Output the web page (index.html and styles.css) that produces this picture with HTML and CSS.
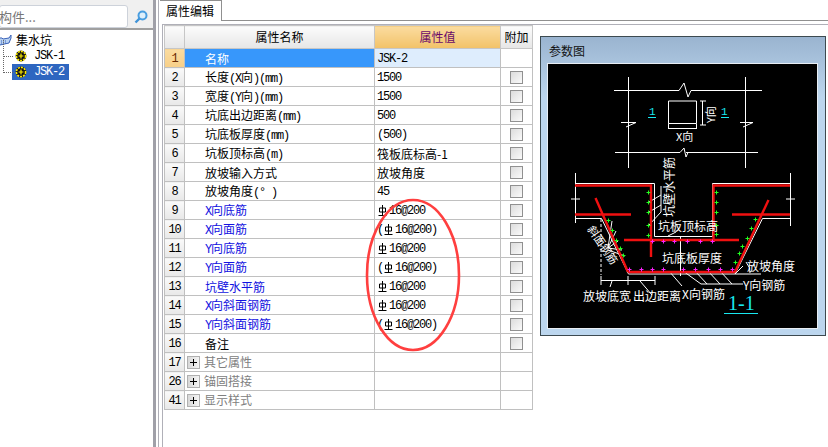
FILE: index.html
```html
<!DOCTYPE html>
<html lang="zh">
<head>
<meta charset="utf-8">
<title>属性编辑</title>
<link rel="stylesheet" href="styles.css">
</head>
<body>
<svg class="defs" width="0" height="0">
  <symbol id="rebar" viewBox="0 0 9 11"><path d="M4.5 0V10M1.5 3H7.5V7H1.5ZM.5 10.5H8.5" fill="none" stroke="#000"/></symbol>
  <symbol id="gear" viewBox="0 0 12 12"><circle cx="6" cy="6" r="5.4" fill="#111"/><circle cx="6" cy="6" r="4.6" fill="none" stroke="#ffee00" stroke-width="1.6" stroke-dasharray="2 1"/><circle cx="6" cy="6" r="2.6" fill="#111"/><path d="M6 3.6V8.4M3.6 6H8.4" stroke="#ffee00" stroke-width="1.2"/></symbol>
</svg>
<div class="app">
  <aside class="side">
    <div class="search">
      <div class="search-input">构件...</div>
      <svg class="search-icon" width="14" height="14" viewBox="0 0 14 14"><circle cx="8.5" cy="5.5" r="4" fill="#dff0fb" stroke="#4a9ee0" stroke-width="2"/><path d="M5.5 8.5 1.5 12.5" stroke="#3f93d8" stroke-width="2.4"/></svg>
    </div>
    <div class="tree">
      <div class="tree-root">
        <svg class="root-icon" width="13" height="14" viewBox="0 0 13 14"><path d="M-1 5h3l1 1 6-1 2-3v3l-2 5-9 2-2-4z" fill="#b9d2f2" stroke="#3a62b8"/><path d="M1 8h6M1 10h5" stroke="#3a62b8" stroke-dasharray="1 1"/></svg>
        <span class="cjk">集水坑</span>
      </div>
      <div class="tree-item"><div class="node"><svg class="gear" width="12" height="12"><use href="#gear"/></svg><span class="lt">JSK-1</span></div></div>
      <div class="tree-item"><div class="node sel"><svg class="gear" width="12" height="12"><use href="#gear"/></svg><span class="lt">JSK-2</span></div></div>
    </div>
  </aside>
  <main class="main">
    <div class="tabs"><div class="tab">属性编辑</div></div>
    <div class="content">
      <table class="grid">
        <colgroup><col class="c0"><col class="c1"><col class="c2"><col class="c3"></colgroup>
        <thead><tr><th></th><th>属性名称</th><th class="hv">属性值</th><th>附加</th></tr></thead>
        <tbody>
          <tr class="active"><td class="n">1</td><td class="name">名称</td><td class="val">JSK-2</td><td></td></tr>
          <tr><td class="n">2</td><td class="name">长度<span class="lt">(X</span>向<span class="lt">)(mm)</span></td><td class="val">1500</td><td class="ck"><i></i></td></tr>
          <tr><td class="n">3</td><td class="name">宽度<span class="lt">(Y</span>向<span class="lt">)(mm)</span></td><td class="val">1500</td><td class="ck"><i></i></td></tr>
          <tr><td class="n">4</td><td class="name">坑底出边距离<span class="lt">(mm)</span></td><td class="val">500</td><td class="ck"><i></i></td></tr>
          <tr><td class="n">5</td><td class="name">坑底板厚度<span class="lt">(mm)</span></td><td class="val">(500)</td><td class="ck"><i></i></td></tr>
          <tr><td class="n">6</td><td class="name">坑板顶标高<span class="lt">(m)</span></td><td class="val cj">筏板底标高-1</td><td class="ck"><i></i></td></tr>
          <tr><td class="n">7</td><td class="name">放坡输入方式</td><td class="val cj">放坡角度</td><td class="ck"><i></i></td></tr>
          <tr><td class="n">8</td><td class="name">放坡角度<span class="lt">(° )</span></td><td class="val">45</td><td class="ck"><i></i></td></tr>
          <tr><td class="n">9</td><td class="name blue"><span class="lt">X</span>向底筋</td><td class="val"><svg class="rb"><use href="#rebar"/></svg>16@200</td><td class="ck"><i></i></td></tr>
          <tr><td class="n">10</td><td class="name blue"><span class="lt">X</span>向面筋</td><td class="val">(<svg class="rb"><use href="#rebar"/></svg>16@200)</td><td class="ck"><i></i></td></tr>
          <tr><td class="n">11</td><td class="name blue"><span class="lt">Y</span>向底筋</td><td class="val"><svg class="rb"><use href="#rebar"/></svg>16@200</td><td class="ck"><i></i></td></tr>
          <tr><td class="n">12</td><td class="name blue"><span class="lt">Y</span>向面筋</td><td class="val">(<svg class="rb"><use href="#rebar"/></svg>16@200)</td><td class="ck"><i></i></td></tr>
          <tr><td class="n">13</td><td class="name blue">坑壁水平筋</td><td class="val"><svg class="rb"><use href="#rebar"/></svg>16@200</td><td class="ck"><i></i></td></tr>
          <tr><td class="n">14</td><td class="name blue"><span class="lt">X</span>向斜面钢筋</td><td class="val"><svg class="rb"><use href="#rebar"/></svg>16@200</td><td class="ck"><i></i></td></tr>
          <tr><td class="n">15</td><td class="name blue"><span class="lt">Y</span>向斜面钢筋</td><td class="val">(<svg class="rb"><use href="#rebar"/></svg>16@200)</td><td class="ck"><i></i></td></tr>
          <tr><td class="n">16</td><td class="name">备注</td><td class="val"></td><td class="ck"><i></i></td></tr>
          <tr class="group"><td class="n">17</td><td class="gname"><i class="plus"></i>其它属性</td><td></td><td></td></tr>
          <tr class="group"><td class="n">26</td><td class="gname"><i class="plus"></i>锚固搭接</td><td></td><td></td></tr>
          <tr class="group"><td class="n">41</td><td class="gname"><i class="plus"></i>显示样式</td><td></td><td></td></tr>
        </tbody>
      </table>
      <svg class="ring" width="100" height="156" viewBox="0 0 100 156"><ellipse cx="50" cy="78" rx="46" ry="75" fill="none" stroke="#ff3f3f" stroke-width="2.6"/></svg>
      <section class="panel">
        <div class="panel-title">参数图</div>
        <svg class="drawing" width="269" height="264" viewBox="548 64 269 264">
          <g class="w">
            <path d="M628.5 77V168M745.5 77V168M614 90.5H679M691 90.5H762M615 152.5H680M686 152.5H758"/>
            <path d="M679 90.5 684 83 688 97 691 90.5M680 152.5 684 148 686 157 688 152.5M621 122.5H636L626 127M740 122.5H753L743 127"/>
            <path d="M668.5 101H696.5V123.5H668.5ZM668.5 123.5V128M696.5 123.5V128M668 128.5H697M702.5 101V125M700 101H706M700 125H706"/>
            <path d="M575.5 173V223M790.5 173V226M571 199H580M786 199H795"/>
            <path d="M575.5 183.5H654.5V236.5H712.5V183.5H790M575.5 218.5H601.5L628.5 274H761M735 274 762.5 218.5H790"/>
            <path d="M661 186V212M661 195 649 202M661 205 649 212M661 212 649 225M680.5 236.5V276M676 232 668 236"/>
            <path d="M601 219V275" stroke-dasharray="3 2"/>
            <path d="M612 221 608 248M616 231 608 248M618 241 608 248M622 250 608 248M625 256 608 250"/>
            <path d="M601 280.5H655M601 276V285M628 276V285M655 276V285M612 281 610 287M640 281 652 295"/>
            <path d="M669 271 682 286M683 271 701 284H743M695 271 707 284M708 271 720 284M720 271 732 284"/>
            <path d="M746 262Q751 268 750 273M743 266 735 274"/>
          </g>
          <g class="r">
            <path d="M575 185.5H651V257M790 185.5H713.5V242M575 214.5H631M732 214.5H790M624 240H739M628 272H735M595.5 198 628 272M768.5 200 735 272"/>
          </g>
          <path class="g" d="M646.5 192.5h4M648.5 190.5v4M646.5 202.5h4M648.5 200.5v4M646.5 212.5h4M648.5 210.5v4M646.5 225.5h4M648.5 223.5v4M646.5 235.5h4M648.5 233.5v4M714.5 192.5h4M716.5 190.5v4M714.5 202.5h4M716.5 200.5v4M714.5 212.5h4M716.5 210.5v4M714.5 225.5h4M716.5 223.5v4M714.5 234.5h4M716.5 232.5v4M606.5 220.5h4M608.5 218.5v4M610.5 230.5h4M612.5 228.5v4M614.5 240.5h4M616.5 238.5v4M618.5 248.5h4M620.5 246.5v4M621.5 255.5h4M623.5 253.5v4M753.5 219.5h4M755.5 217.5v4M749.5 228.5h4M751.5 226.5v4M745.5 238.5h4M747.5 236.5v4M740.5 246.5h4M742.5 244.5v4M737.5 253.5h4M739.5 251.5v4M733.5 262.5h4M735.5 260.5v4"/>
          <path class="m" d="M650.5 241.5h4M652.5 239.5v4M661.5 241.5h4M663.5 239.5v4M672.5 241.5h4M674.5 239.5v4M685.5 241.5h4M687.5 239.5v4M698.5 241.5h4M700.5 239.5v4M710.5 241.5h4M712.5 239.5v4M627.5 269.5h4M629.5 267.5v4M639.5 269.5h4M641.5 267.5v4M650.5 269.5h4M652.5 267.5v4M661.5 269.5h4M663.5 267.5v4M681.5 269.5h4M683.5 267.5v4M693.5 269.5h4M695.5 267.5v4M706.5 269.5h4M708.5 267.5v4M718.5 269.5h4M720.5 267.5v4M730.5 269.5h4M732.5 267.5v4"/>
          <g class="t">
            <text x="676" y="141" class="sm">X向</text>
            <text x="658" y="231">坑板顶标高</text>
            <text x="662" y="263">坑底板厚度</text>
            <text x="747" y="271">放坡角度</text>
            <text x="743" y="290">Y向钢筋</text>
            <text x="682" y="299">X向钢筋</text>
            <text x="633" y="301">出边距离</text>
            <text x="583" y="301">放坡底宽</text>
            <text class="sm" transform="translate(715 123) rotate(-90)">Y向</text>
            <text transform="translate(674 217) rotate(-90)">坑壁水平筋</text>
            <text class="sm" transform="translate(587 229) rotate(56)">斜面钢筋</text>
          </g>
          <g class="c">
            <text x="649" y="115" class="one">1</text>
            <text x="721" y="115" class="one">1</text>
            <text x="728" y="310" class="big">1-1</text>
            <path d="M648 117.5H656M721 117.5H729M724 313.5H758"/>
          </g>
        </svg>
      </section>
    </div>
  </main>
</div>
</body>
</html>
```
FILE: styles.css
```css
* { box-sizing: border-box; }
html, body { margin: 0; height: 100%; background: #fff; overflow: hidden; }
body { font: 12px/1 "Noto Sans CJK SC", "Liberation Sans", sans-serif; color: #000; }
.defs { position: absolute; }
.lt { font-family: "Liberation Mono", monospace; font-size: 12px; letter-spacing: -1.2px; }
.app { display: flex; height: 447px; }
.side { width: 156px; flex: none; border-right: 3px solid #a0a0a8; }
.search { height: 30px; background: #f0f0f0; border-bottom: 2px solid #a0a0a0; padding: 5px 0 0; display: flex; gap: 6px; align-items: flex-start; }
.search-input { width: 129px; height: 23px; margin-left: -1px; padding: 4px 0 0; background: #fff; border: 1px solid #cdd2da; border-radius: 3px; color: #777; font-size: 13px; overflow: hidden; text-indent: -1px; }
.search-icon { margin-top: 5px; }
.tree { padding-top: 2px; position: relative; }
.tree-root { height: 16px; display: flex; align-items: center; gap: 3px; }
.tree-root .cjk { font-size: 12px; }
.tree-item { height: 16px; display: flex; align-items: center; padding-left: 12px; position: relative; }
.tree-item::before { content: ""; position: absolute; left: 3px; top: -8px; width: 9px; height: 16px; border-left: 1px dotted #666; border-bottom: 1px dotted #666; }
.node { height: 16px; width: 57px; display: flex; align-items: center; padding-left: 3px; gap: 7px; }
.gear { flex: none; }
.sel { background: #2e66c0; color: #fff; }
.main { flex: 1; min-width: 0; margin-left: 2px; border-left: 1px solid #b0b0b8; padding-left: 1px; }
.tabs { height: 21px; border-bottom: 1px solid #909090; }
.tab { width: 62px; height: 21px; background: #fff; border: 1px solid #909090; border-width: 1px 1px 0 0; padding: 4px 0 0 6px; font-size: 12px; }
.content { position: relative; border-left: 1px solid #b0b0b8; border-top: 1px solid #b0b0b8; margin: 3px 0 0 2px; height: 423px; padding: 0 0 0 1px; }
.grid { border-collapse: collapse; table-layout: fixed; width: 368px; }
.c0 { width: 20px; } .c1 { width: 190px; } .c2 { width: 126px; } .c3 { width: 32px; }
.grid th { height: 23px; font-weight: 400; background: linear-gradient(#fcfcfc, #e6e6e6); border: 1px solid #c6c6c6; font-size: 12px; padding: 0; }
.grid th.hv { background: linear-gradient(#fbdca0, #f2c268); color: #6a0a6a; }
.grid td { height: 19px; border: 1px solid #c0c0c0; padding: 1px 0 0; white-space: nowrap; overflow: hidden; }
.n { text-align: center; background: linear-gradient(#fafafa, #e8e8e8); font-family: "Liberation Mono", monospace; font-size: 12px; letter-spacing: -1.2px; }
.grid td.name { padding-left: 20px; font-size: 12px; }
.blue { color: #1212e0; }
.grid td.val { padding-left: 2px; font-family: "Liberation Mono", monospace; font-size: 12px; letter-spacing: -1.2px; }
.grid td.val.cj { font-family: "Noto Sans CJK SC", sans-serif; font-size: 12px; letter-spacing: 0; }
.rb { width: 9px; height: 11px; margin: 0 2px 0 1px; vertical-align: -2px; }
.active td.n { background: linear-gradient(#fbdca0, #f7cf88); color: #6a2a00; }
.active td.name { background: #3797fb; color: #fff; }
.active td.val { background: #deedfd; }
.ck { text-align: center; }
.ck i { display: block; width: 13px; height: 13px; margin: 0 auto; border: 1px solid #909090; background: linear-gradient(135deg, #dcdcdc, #fafafa); }
.group td { color: #808080; }
.group td.n { color: #000; }
.grid td.gname { padding-left: 2px; }
.plus { display: inline-block; width: 13px; height: 13px; margin-right: 4px; vertical-align: -2px; border: 1px solid #b0b0b0; background: linear-gradient(#000, #000) center / 7px 1px no-repeat, linear-gradient(#000, #000) center / 1px 7px no-repeat, linear-gradient(90deg, #d8d8d8, #f4f4f4); }
.ring { position: absolute; left: 200px; top: 172px; pointer-events: none; }
.panel { position: absolute; left: 377px; top: 11px; width: 286px; height: 300px; border: 1px solid #3c4a50; background: linear-gradient(#9ab4d0, #bcd6ee 60px); padding: 0 7px; display: flex; flex-direction: column; }
.panel-title { height: 27px; padding: 8px 0 0 1px; color: #111; font-size: 12px; }
.drawing { display: block; background: #000; box-shadow: 0 0 0 1px #e8eef4; }
.w path { fill: none; stroke: #fff; stroke-width: 1; }
.r path { fill: none; stroke: #f01010; stroke-width: 2.4; }
.g { fill: none; stroke: #20ff20; stroke-width: 1; }
.m { fill: none; stroke: #ff20ff; stroke-width: 1; }
.t text { fill: #fff; font-size: 12px; }
.t text.sm { font-size: 11px; }
.c text { fill: #18e8f0; }
.c .one { font: 11px "Liberation Mono", monospace; }
.c .big { font: 20px "Liberation Serif", serif; }
.c path { fill: none; stroke: #18e8f0; stroke-width: 1; }
```
